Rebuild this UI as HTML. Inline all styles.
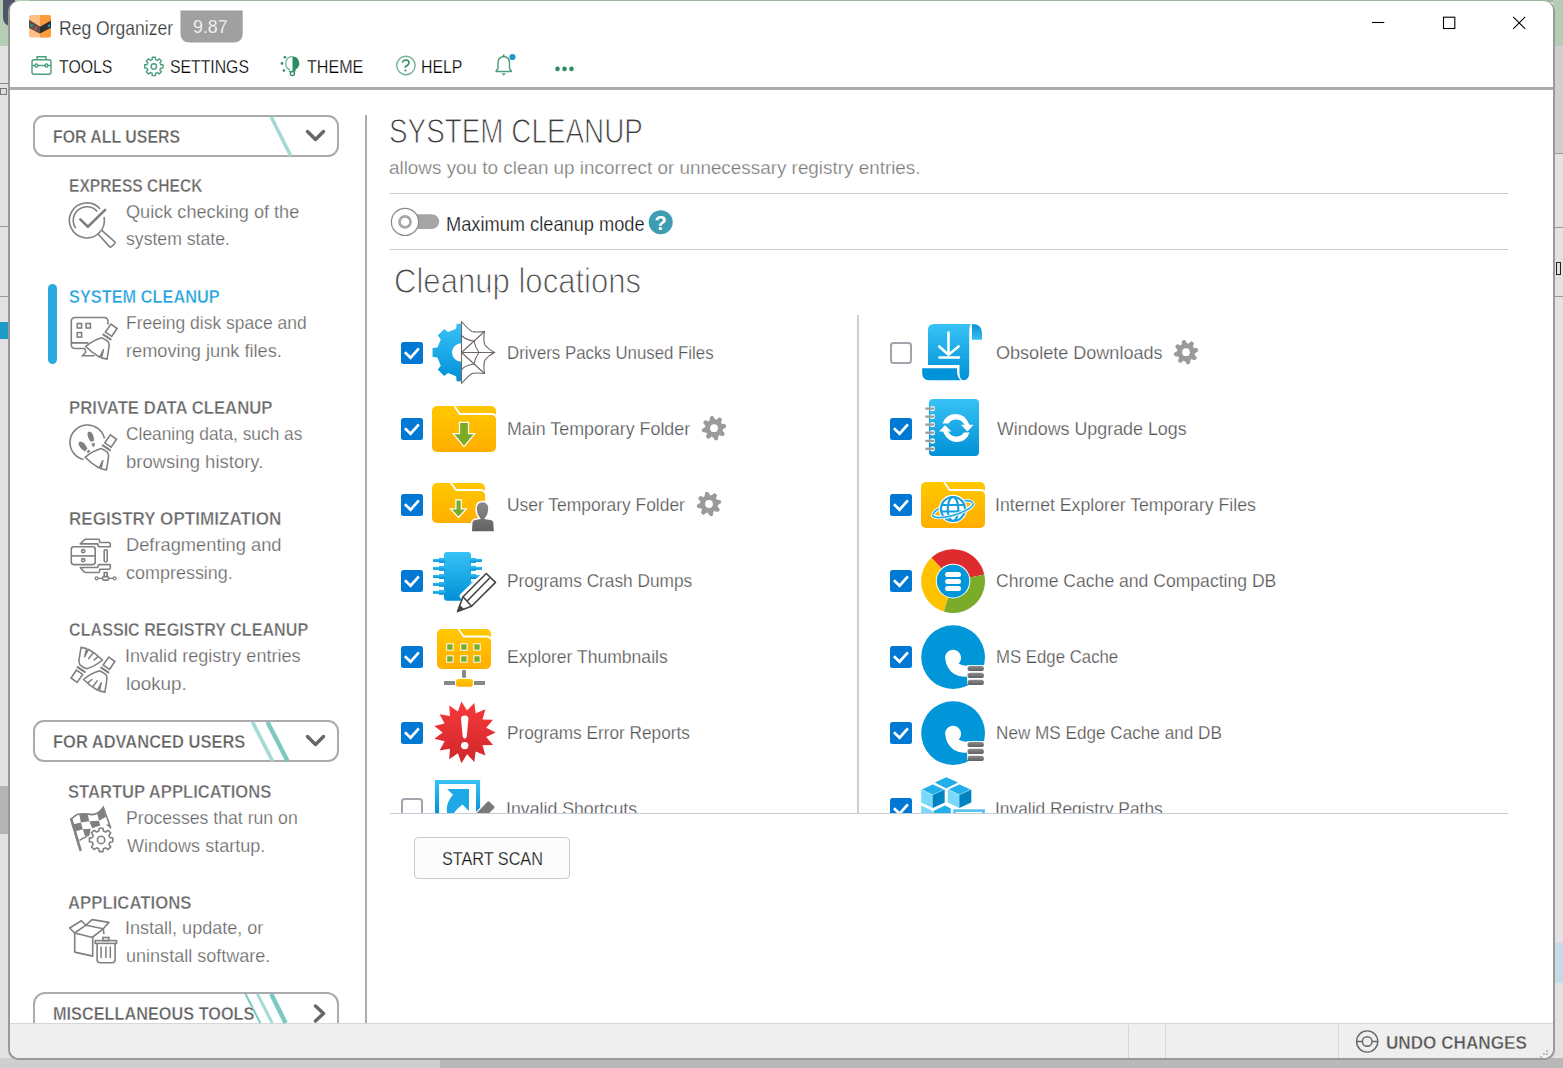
<!DOCTYPE html>
<html><head><meta charset="utf-8">
<style>
*{margin:0;padding:0;box-sizing:border-box}
html,body{width:1563px;height:1068px;overflow:hidden;background:#c9c9c9;font-family:"Liberation Sans",sans-serif}
.a{position:absolute}
.tx{position:absolute;white-space:nowrap;line-height:1;transform-origin:0 0;font-family:"Liberation Sans",sans-serif}
svg{position:absolute;overflow:visible}
</style></head><body>
<!-- desktop background -->
<div class=a style="left:0;top:0;width:1563px;height:1068px;background:#e2e2e2"></div>
<div class=a style="left:0;top:0;width:1563px;height:2px;background:#9fb39f"></div>
<div class=a style="left:0;top:0;width:30px;height:46px;background:#b4cdb4"></div>
<div class=a style="left:0;top:83px;width:10px;height:1px;background:#888"></div>
<div class=a style="left:0;top:88px;width:7px;height:7px;border:1px solid #777;background:#ddd"></div>
<div class=a style="left:3px;top:0;width:12px;height:26px;background:#4f5666;border-radius:0 0 0 8px"></div>
<div class=a style="left:1553px;top:0;width:10px;height:46px;background:#b4cdb4"></div>
<div class=a style="left:1553px;top:46px;width:10px;height:107px;background:#cfcfcf"></div>
<div class=a style="left:1553px;top:153px;width:10px;height:1px;background:#999"></div>
<div class=a style="left:1553px;top:227px;width:10px;height:1px;background:#999"></div>
<div class=a style="left:1553px;top:296px;width:10px;height:1px;background:#999"></div>
<div class=a style="left:1556px;top:262px;width:5px;height:13px;border:1px solid #222"></div>
<div class=a style="left:1553px;top:943px;width:10px;height:40px;background:#c5dbe8"></div>
<div class=a style="left:0;top:226px;width:10px;height:1px;background:#999"></div>
<div class=a style="left:0;top:296px;width:10px;height:1px;background:#999"></div>
<div class=a style="left:0;top:322px;width:10px;height:17px;background:#1e9ac8"></div>
<div class=a style="left:0;top:786px;width:10px;height:48px;background:#b4b4b4"></div>
<div class=a style="left:0;top:1058px;width:1563px;height:10px;background:#b8b8b8"></div>
<div class=a style="left:0;top:1058px;width:440px;height:10px;background:#cfcfcf"></div>
<!-- window -->
<div class=a style="left:8px;top:1px;width:1547px;height:1059px;border-radius:10px;background:#9a9a9a"></div>
<div class=a style="left:10px;top:1px;width:1543px;height:1057px;border-radius:9px;background:#fff;overflow:hidden">
  <div class=a style="left:0;top:86px;width:1543px;height:3px;background:#ababab"></div>
  <div class=a style="left:0;top:1022px;width:1543px;height:1px;background:#d8d8d8"></div>
  <div class=a style="left:0;top:1023px;width:1543px;height:35px;background:#efefef"></div>
  <div class=a style="left:1118px;top:1024px;width:1px;height:33px;background:#d6d6d6"></div>
  <div class=a style="left:1155px;top:1024px;width:1px;height:33px;background:#d6d6d6"></div>
  <div class=a style="left:1328px;top:1024px;width:1px;height:33px;background:#d6d6d6"></div>
  <div class=a style="left:355px;top:114px;width:2px;height:908px;background:#ababab"></div>
</div>
<svg width="1563" height="1068" viewBox="0 0 1563 1068" style="left:0;top:0">
<defs>
  <linearGradient id="gY" x1="0" y1="0" x2="0" y2="1"><stop offset="0" stop-color="#ffc800"/><stop offset="1" stop-color="#ffae00"/></linearGradient>
  <linearGradient id="gB" x1="0" y1="0" x2="0" y2="1"><stop offset="0" stop-color="#38c2f6"/><stop offset="1" stop-color="#0090d6"/></linearGradient>
  <linearGradient id="gR" x1="0" y1="0" x2="0" y2="1"><stop offset="0" stop-color="#f8383b"/><stop offset="1" stop-color="#cf272b"/></linearGradient>
  <linearGradient id="gG" x1="0" y1="0" x2="0" y2="1"><stop offset="0" stop-color="#8c8c8c"/><stop offset="1" stop-color="#606060"/></linearGradient>
  <clipPath id="listclip"><rect x="380" y="300" width="1140" height="513.5"/></clipPath>
</defs>

<!-- app icon -->
<g transform="translate(29,15)">
  <rect x="0" y="0" width="22" height="22.5" rx="2.5" fill="#fdbf85"/>
  <path d="M11 0H19.5Q22 0 22 2.5V20Q22 22.5 19.5 22.5H11Z" fill="#fd9a3a"/>
  <path d="M0 5L11 11.8L22 5.6V12.7L11 18.6L0 12.7Z" fill="#2f2f2f"/>
  <path d="M0 5L11 11.8V18.6L0 12.7Z" fill="#5b4f50"/>
  <rect x="1.5" y="9.5" width="2.4" height="2.4" fill="#1fa57a"/>
  <rect x="5.3" y="12.3" width="2.4" height="2.4" fill="#e04a3a"/>
  <rect x="18.7" y="9.6" width="2.4" height="2.4" fill="#2a93c0"/>
</g>
<!-- version badge -->
<path d="M180.5 10.5H242.7V33.5Q242.7 42.6 233.6 42.6H189.6Q180.5 42.6 180.5 33.5Z" fill="#a0a0a0"/>

<!-- menu icons -->
<g fill="none" stroke="#4a9f7d" stroke-width="1.4">
  <!-- toolbox -->
  <rect x="32" y="59.8" width="19" height="14.5" rx="2"/>
  <path d="M37 59.8V56.8H46V59.8"/>
  <path d="M32 65.5H51"/>
  <rect x="35.2" y="64" width="2.5" height="3" rx="1" fill="#fff"/>
  <rect x="45.2" y="64" width="2.5" height="3" rx="1" fill="#fff"/>
  <!-- gear -->
  <path d="M152.17 59.55L152.22 57.29L155.48 57.29L155.53 59.55L157.54 60.39L159.17 58.82L161.48 61.13L159.91 62.76L160.75 64.77L163.01 64.82L163.01 68.08L160.75 68.13L159.91 70.14L161.48 71.77L159.17 74.08L157.54 72.51L155.53 73.35L155.48 75.61L152.22 75.61L152.17 73.35L150.16 72.51L148.53 74.08L146.22 71.77L147.79 70.14L146.95 68.13L144.69 68.08L144.69 64.82L146.95 64.77L147.79 62.76L146.22 61.13L148.53 58.82L150.16 60.39Z" stroke-linejoin="round" stroke-width="1.4"/>
  <circle cx="153.85" cy="66.45" r="2.7" stroke-width="1.4"/>
  <!-- help circle -->
  <circle cx="405.9" cy="65.5" r="9.2" stroke="#6fb497" stroke-width="1.4"/>
  <!-- bell -->
  <path d="M496 71.5H511.5L509.5 68.5V63Q509.5 57 503.7 56.5Q498 57 498 63V68.5Z" stroke-linejoin="round"/>
</g>
<!-- theme bulb -->
<g>
  <path d="M292.5 56.3A7.1 7.1 0 0 1 295.6 69.6V71.6H292.5Z" fill="#2e8b63"/>
  <path d="M292.5 56.3A7.1 7.1 0 0 0 289.4 69.6V71.6H292.5" fill="none" stroke="#6fb497" stroke-width="1.3"/>
  <circle cx="292.4" cy="73.6" r="2.1" fill="none" stroke="#2e8b63" stroke-width="1.3"/>
  <circle cx="284.9" cy="57.2" r="1.3" fill="#2e8b63"/>
  <circle cx="282" cy="63.4" r="1.3" fill="#2e8b63"/>
  <circle cx="283.9" cy="70.5" r="1.3" fill="#2e8b63"/>
</g>
<path d="M402.6 61.8Q404 60 406 60Q409 60.3 409 62.8Q409 64.3 406.8 65.8Q405.3 66.6 405.3 67.3" fill="none" stroke="#2e8b63" stroke-width="1.6" stroke-linecap="round"/><circle cx="405.4" cy="70.5" r="1.1" fill="#2e8b63"/>
<path d="M501.6 73.5h4.3l-2.15 2z" fill="#2e8b63"/>
<path d="M503.7 56.5V54.5" stroke="#2e8b63" stroke-width="1.5"/>
<circle cx="512.5" cy="57" r="3.1" fill="#1e96d0"/>
<g fill="#2e8b63"><circle cx="557.5" cy="68.9" r="2.3"/><circle cx="564.5" cy="68.9" r="2.3"/><circle cx="571.5" cy="68.9" r="2.3"/></g>

<!-- window controls -->
<g stroke="#000" stroke-width="1.1" fill="none">
  <path d="M1372 22.5H1384.3"/>
  <rect x="1443.5" y="17.2" width="11.3" height="11.3"/>
  <path d="M1513.2 16.9L1525.2 28.9M1525.2 16.9L1513.2 28.9"/>
</g>

<!-- sidebar boxes -->
<rect x="34" y="116" width="304" height="40" rx="10" fill="none" stroke="#ababab" stroke-width="2"/>
<path d="M271.2 117L290.8 156" stroke="#a3d8d3" stroke-width="3.6"/>
<path d="M307.5 131.5L315.5 139.5L323.5 131.5" fill="none" stroke="#666" stroke-width="3.4" stroke-linecap="round" stroke-linejoin="round"/>
<rect x="34" y="721" width="304" height="40" rx="10" fill="none" stroke="#ababab" stroke-width="2"/>
<path d="M252.5 722L272.5 761" stroke="#a6dbd5" stroke-width="3.8"/>
<path d="M267.5 722L287.5 761" stroke="#7ec8c0" stroke-width="4.4"/>
<path d="M307.5 736.5L315.5 744.5L323.5 736.5" fill="none" stroke="#666" stroke-width="3.4" stroke-linecap="round" stroke-linejoin="round"/>
<clipPath id="miscclip"><rect x="20" y="980" width="340" height="43"/></clipPath><g clip-path="url(#miscclip)"><rect x="34" y="993" width="304" height="60" rx="11" fill="none" stroke="#ababab" stroke-width="2"/></g>
<path d="M245.5 994L260.3 1023" stroke="#7ccac4" stroke-width="2"/>
<path d="M257.4 994L272.2 1023" stroke="#a4dbd6" stroke-width="3"/>
<path d="M271.2 994L285.6 1023" stroke="#7cc8c2" stroke-width="4.5"/>
<path d="M315.5 1006L323.5 1013.5L315.5 1021" fill="none" stroke="#666" stroke-width="3.4" stroke-linecap="round" stroke-linejoin="round"/>

<g transform="translate(64,198)" fill="none" stroke="#808080" stroke-width="1.6"><path d="M40.06 18.97A17.5 17.5 0 1 1 36.11 10.92"/><path d="M11.76 30.2A13.6 13.6 0 0 1 33.2 13.51"/><path d="M16.3 21.4L23.9 28.7L41.1 11.9" stroke-width="2.7" stroke-linecap="round" stroke-linejoin="round"/><path d="M37.5 32.1L50.9 43.8Q51.5 44.6 50.8 45.5L47.2 48.9Q46.3 49.4 45.5 48.6L34.1 36" stroke-linejoin="round"/></g>
<g transform="translate(64,310)" fill="none" stroke="#808080" stroke-width="1.6"><path d="M44 14.4V11.5Q44 7.5 40 7.5H11.3Q7.3 7.5 7.3 11.5V34.5Q7.3 38.5 11.3 38.5H20.5Q22 40 21.5 42.5L18.5 45.8H30.5"/><path d="M7.3 32.9H24.5" stroke-width="1.8"/><rect x="13.3" y="13.5" width="4.3" height="4.5"/><rect x="22.1" y="13.5" width="4.3" height="4.5"/><rect x="13.3" y="22.6" width="4.3" height="4.5"/><g transform="translate(2.2,-1)"><path d="M44.8 15.1L50.9 19.5L45.5 27.3L39.2 23.1Z"/><path d="M37.2 25.6L44.3 30.4" stroke-width="2.2" stroke-linecap="round"/><path d="M35.5 28.7Q39.5 30.5 41.9 32.6Q43.5 35 42.8 38L40.9 50.1L35.3 48.9L37.2 40.9L33.6 48.2Q26 44 19.5 37.5Q27 31 35.5 28.7Z" stroke-linejoin="round"/></g></g>
<g transform="translate(64,420)" fill="none" stroke="#808080" stroke-width="1.6"><path d="M19.5 39.5A17.5 17.5 0 1 1 40.5 18.5"/><path d="M25.3 11.5Q28.5 11.5 29.8 17.5L30 21L26.5 21.7Q23.5 17 23.5 14Q23.5 11.5 25.3 11.5Z" fill="#808080" stroke="none"/><path d="M27.5 23.3L30.8 23L30.5 26.5L28.5 26.8Z" fill="#808080" stroke="none"/><path d="M16.5 21.5Q20 21.5 23.5 28.5L21 31.5Q16 29 14.5 24Q14.3 21.5 16.5 21.5Z" fill="#808080" stroke="none"/><path d="M23.3 32.3L25.7 30.3" stroke-width="2.2"/><g transform="translate(1.6,-0.2)"><path d="M44.8 15.1L50.9 19.5L45.5 27.3L39.2 23.1Z"/><path d="M37.2 25.6L44.3 30.4" stroke-width="2.2" stroke-linecap="round"/><path d="M35.5 28.7Q39.5 30.5 41.9 32.6Q43.5 35 42.8 38L40.9 50.1L35.3 48.9L37.2 40.9L33.6 48.2Q26 44 19.5 37.5Q27 31 35.5 28.7Z" stroke-linejoin="round"/></g></g>
<g transform="translate(64,532)" fill="none" stroke="#808080" stroke-width="1.6"><rect x="7.3" y="14.8" width="23.9" height="17.8" rx="2.5"/><path d="M7.3 23.9H31.2"/><circle cx="19.2" cy="19.2" r="1.6"/><circle cx="19.2" cy="28.2" r="1.6"/><path d="M16.3 11.9L20 8Q20.5 7.3 22 7.3H34.5Q35.3 7.5 35.5 8.5L35.8 10.5H45Q46.3 10.8 46.3 12V14.7H35.5Q34.3 14.5 34 13.5L33.8 11.9Z" stroke-linejoin="round"/><path d="M16.3 35.5L20 39.8Q20.5 40.5 22 40.5H34.5Q35.3 40.3 35.5 39.3L35.8 37.3H45Q46.3 37 46.3 35.8V32.6H35.5Q34.3 32.8 34 33.8L33.8 35.5Z" stroke-linejoin="round"/><rect x="40.2" y="17.8" width="3" height="12" rx="1"/><rect x="40.2" y="40.6" width="3" height="3.8"/><rect x="38.6" y="44.8" width="6" height="3.3" rx="1"/><path d="M34 46.3H38.6M44.6 46.3H49.2" stroke-width="1.3"/><circle cx="32.6" cy="46.3" r="1.5" stroke-width="1.3"/><circle cx="50.6" cy="46.3" r="1.5" stroke-width="1.3"/></g>
<g transform="translate(64,642)" fill="none" stroke="#808080" stroke-width="1.6"><path d="M44.8 15.1L50.9 19.5L45.5 27.3L39.2 23.1Z"/><path d="M37.2 25.6L44.3 30.4" stroke-width="2.2" stroke-linecap="round"/><path d="M35.5 28.7Q39.5 30.5 41.9 32.6Q43.5 35 42.8 38L40.9 50.1L35.3 48.9L37.2 40.9L33.6 48.2Q26 44 19.5 37.5Q27 31 35.5 28.7Z" stroke-linejoin="round"/><path d="M27.8 37.5L23.9 40.9M33.1 38.9L29.2 44.3" stroke-linecap="round"/><g transform="rotate(180 28.95 27.75)"><path d="M44.8 15.1L50.9 19.5L45.5 27.3L39.2 23.1Z"/><path d="M37.2 25.6L44.3 30.4" stroke-width="2.2" stroke-linecap="round"/><path d="M35.5 28.7Q39.5 30.5 41.9 32.6Q43.5 35 42.8 38L40.9 50.1L35.3 48.9L37.2 40.9L33.6 48.2Q26 44 19.5 37.5Q27 31 35.5 28.7Z" stroke-linejoin="round"/><path d="M27.8 37.5L23.9 40.9M33.1 38.9L29.2 44.3" stroke-linecap="round"/></g></g>
<defs><clipPath id="flagc"><path transform="translate(64,800)" d="M7 19.1Q12 14.5 15.2 14Q22 13.5 28.1 14.6Q34.5 14.5 39.3 7.3L46.9 28.1L35 40L26 40Q20 41 15.5 41Z"/></clipPath></defs>
<g clip-path="url(#flagc)"><g transform="translate(64,800)"><path d="M15.2 14L23.6 14L25.3 21.3L16.9 22.5Z" fill="#808080" stroke="none"/><path d="M33.1 13.2L39.3 7.3L41.9 16.9L35.1 20.8Z" fill="#808080" stroke="none"/><path d="M9.3 24.2L16.9 22.5L18.8 29.2L11.2 31.5Z" fill="#808080" stroke="none"/><path d="M25.3 21.3L34.8 20.8L36.3 25.5L28.1 28.3Z" fill="#808080" stroke="none"/><path d="M18.8 29.2L26.6 28.8L25.5 36L21.2 36.8Z" fill="#808080" stroke="none"/><path d="M41.9 24.7L46.5 24L47 28.6Z" fill="#808080" stroke="none"/></g></g>
<g transform="translate(64,800)" fill="none" stroke="#808080" stroke-width="1.6"><path d="M7.3 19.3L16.4 49.8" stroke-width="2.6" stroke-linecap="round"/><path d="M7 19.1Q12 14.5 15.2 14Q22 13.5 28.1 14.6Q34.5 14.5 39.3 7.3L46.9 28.5"/><path d="M15.5 40.5Q19 37.5 22.5 37" /><circle cx="37.1" cy="39.9" r="12.5" fill="#fff" stroke="none"/><path d="M35.3 28.2H38.9L39.5 31.1L41.6 32L44.1 30.3L46.7 32.9L45 35.4L45.9 37.5L48.8 38.1V41.7L45.9 42.3L45 44.4L46.7 46.9L44.1 49.5L41.6 47.8L39.5 48.7L38.9 51.6H35.3L34.7 48.7L32.6 47.8L30.1 49.5L27.5 46.9L29.2 44.4L28.3 42.3L25.4 41.7V38.1L28.3 37.5L29.2 35.4L27.5 32.9L30.1 30.3L32.6 32L34.7 31.1Z" stroke-linejoin="round"/><circle cx="37.1" cy="39.9" r="3.7"/></g>
<g transform="translate(64,910)" fill="none" stroke="#808080" stroke-width="1.6"><path d="M10.7 23V42.1L28.7 46.1V27.5L10.7 23Z" stroke-linejoin="round"/><path d="M10.7 23L21.9 15.2L39.3 18.8L28.1 27.5" stroke-linejoin="round"/><path d="M10.7 23L5.6 18L17.4 10.7L21.9 15.2" stroke-linejoin="round"/><path d="M21.9 15.2L28.1 9.6L44.9 12.4L39.3 18.8" stroke-linejoin="round"/><path d="M39.3 18.8L39.9 24.2"/><path d="M28.7 29V46.1" stroke="#fff" stroke-width="0"/><rect x="31.2" y="30.6" width="21.3" height="2.8" fill="#fff"/><rect x="38.8" y="27.5" width="6.1" height="3.1"/><path d="M33.1 33.7V49.8Q33.1 52.8 36.1 52.8H48.1Q51.1 52.8 51.1 49.8V33.7"/><path d="M37.1 37.1V47.5M41.9 37.1V47.5M46.3 37.1V47.5" stroke-width="1.5" stroke-linecap="round"/></g>

<!-- active bar -->
<rect x="48" y="284" width="9" height="80" rx="4.5" fill="#29abe2"/>

<!-- toggle -->
<rect x="405" y="214.3" width="34.2" height="14.6" rx="7.3" fill="#a5a5a5"/>
<circle cx="405" cy="221.9" r="13.6" fill="#fff" stroke="#8a8a8a" stroke-width="1.2"/>
<circle cx="405" cy="221.9" r="5.5" fill="none" stroke="#a5a5a5" stroke-width="2.6"/>
<circle cx="660.7" cy="222.2" r="12" fill="#3f9db3"/>
<text x="660.7" y="229.5" font-family="Liberation Sans" font-weight="700" font-size="20" fill="#fff" text-anchor="middle">?</text>

<!-- dividers -->
<rect x="390" y="193" width="1118" height="1" fill="#c6cbd8"/>
<rect x="390" y="249" width="1118" height="1" fill="#c6cbd8"/>
<rect x="857" y="315" width="2" height="498" fill="#cfcfcf"/>

<!-- START SCAN button -->
<rect x="414.5" y="837.5" width="155" height="41" rx="4" fill="#fcfcfc" stroke="#c8c8c8" stroke-width="1"/>

<!-- undo icon -->
<g fill="none" stroke="#666" stroke-width="1.4">
  <circle cx="1367.2" cy="1041.5" r="10.6"/>
  <circle cx="1367.2" cy="1041.5" r="4.8"/>
  <path d="M1356.6 1041.5H1362.4M1372 1041.5H1377.8"/>
</g>
<g fill="#bbb"><rect x="1546" y="1050" width="2" height="2"/><rect x="1543" y="1053" width="2" height="2"/><rect x="1546" y="1053" width="2" height="2"/><rect x="1540" y="1056" width="2" height="2"/></g>

<g clip-path="url(#listclip)">
<rect x="401" y="342" width="22" height="22" rx="2.5" fill="#0078d4"/><path d="M405.9 353.2L410.6 357.7L418 349.3" fill="none" stroke="#fff" stroke-width="2.7" stroke-linecap="square"/>
<rect x="891" y="343" width="20" height="20" rx="2.5" fill="#fff" stroke="#a3a3ab" stroke-width="2"/>
<rect x="401" y="418" width="22" height="22" rx="2.5" fill="#0078d4"/><path d="M405.9 429.2L410.6 433.7L418 425.3" fill="none" stroke="#fff" stroke-width="2.7" stroke-linecap="square"/>
<rect x="890" y="418" width="22" height="22" rx="2.5" fill="#0078d4"/><path d="M894.9 429.2L899.6 433.7L907 425.3" fill="none" stroke="#fff" stroke-width="2.7" stroke-linecap="square"/>
<rect x="401" y="494" width="22" height="22" rx="2.5" fill="#0078d4"/><path d="M405.9 505.2L410.6 509.7L418 501.3" fill="none" stroke="#fff" stroke-width="2.7" stroke-linecap="square"/>
<rect x="890" y="494" width="22" height="22" rx="2.5" fill="#0078d4"/><path d="M894.9 505.2L899.6 509.7L907 501.3" fill="none" stroke="#fff" stroke-width="2.7" stroke-linecap="square"/>
<rect x="401" y="570" width="22" height="22" rx="2.5" fill="#0078d4"/><path d="M405.9 581.2L410.6 585.7L418 577.3" fill="none" stroke="#fff" stroke-width="2.7" stroke-linecap="square"/>
<rect x="890" y="570" width="22" height="22" rx="2.5" fill="#0078d4"/><path d="M894.9 581.2L899.6 585.7L907 577.3" fill="none" stroke="#fff" stroke-width="2.7" stroke-linecap="square"/>
<rect x="401" y="646" width="22" height="22" rx="2.5" fill="#0078d4"/><path d="M405.9 657.2L410.6 661.7L418 653.3" fill="none" stroke="#fff" stroke-width="2.7" stroke-linecap="square"/>
<rect x="890" y="646" width="22" height="22" rx="2.5" fill="#0078d4"/><path d="M894.9 657.2L899.6 661.7L907 653.3" fill="none" stroke="#fff" stroke-width="2.7" stroke-linecap="square"/>
<rect x="401" y="722" width="22" height="22" rx="2.5" fill="#0078d4"/><path d="M405.9 733.2L410.6 737.7L418 729.3" fill="none" stroke="#fff" stroke-width="2.7" stroke-linecap="square"/>
<rect x="890" y="722" width="22" height="22" rx="2.5" fill="#0078d4"/><path d="M894.9 733.2L899.6 737.7L907 729.3" fill="none" stroke="#fff" stroke-width="2.7" stroke-linecap="square"/>
<rect x="402" y="799" width="20" height="20" rx="2.5" fill="#fff" stroke="#a3a3ab" stroke-width="2"/>
<rect x="890" y="798" width="22" height="22" rx="2.5" fill="#0078d4"/><path d="M894.9 809.2L899.6 813.7L907 805.3" fill="none" stroke="#fff" stroke-width="2.7" stroke-linecap="square"/>
<clipPath id="halfg"><rect x="420" y="310" width="41.2" height="90"/></clipPath>
<g clip-path="url(#halfg)"><path d="M456.09 328.74L456.66 323.86L465.74 323.86L466.31 328.74L474.38 332.09L478.25 329.04L484.66 335.45L481.61 339.32L484.96 347.39L489.84 347.96L489.84 357.04L484.96 357.61L481.61 365.68L484.66 369.55L478.25 375.96L474.38 372.91L466.31 376.26L465.74 381.14L456.66 381.14L456.09 376.26L448.02 372.91L444.15 375.96L437.74 369.55L440.79 365.68L437.44 357.61L432.56 357.04L432.56 347.96L437.44 347.39L440.79 339.32L437.74 335.45L444.15 329.04L448.02 332.09Z" fill="url(#gB)"/><circle cx="461.2" cy="352.5" r="9.2" fill="#fff"/></g>
<g fill="none" stroke="#6f6565" stroke-width="1.1"><path d="M461.5 321.5V383.5"/><path d="M461.5 321.5Q469 330 472 331.5Q476 332.5 484.5 331.5Q483 340 485 345Q488 349 494.5 352.5Q488 356 485 360Q483 365 484.5 373.5Q476 372.5 472 373.5Q469 375 461.5 383.5"/><path d="M461.5 352.5H494.5M461.5 352.5L484.5 331.5M461.5 352.5L484.5 373.5"/><path d="M461.5 335.5Q466 340 474 341Q475 347 479 352.5Q475 358 474 364Q466 365 461.5 369.5"/></g>
<rect x="432" y="406" width="64" height="46" rx="5" fill="url(#gY)"/><path d="M453.8 405L459.8 414H491Q496 414 496.5 418" fill="none" stroke="#fff" stroke-width="1.8"/>
<path d="M459.5 422.4h9v11.3h6.3L464 446.6L453.2 433.7h6.3z" fill="#7aab2a" stroke="#fff" stroke-width="1.2" stroke-linejoin="miter"/>
<path d="M710.57 416.91L712.84 416.46L714.83 419.74L716.47 420.07L719.56 417.79L721.49 419.08L720.57 422.81L721.49 424.20L725.29 424.77L725.74 427.04L722.46 429.03L722.13 430.67L724.41 433.76L723.12 435.69L719.39 434.77L718.00 435.69L717.43 439.49L715.16 439.94L713.17 436.66L711.53 436.33L708.44 438.61L706.51 437.32L707.43 433.59L706.51 432.20L702.71 431.63L702.26 429.36L705.54 427.37L705.87 425.73L703.59 422.64L704.88 420.71L708.61 421.63L710.00 420.71Z" fill="#9a9a9a" stroke="#9a9a9a" stroke-width="1" stroke-linejoin="round"/><circle cx="714" cy="428.2" r="3.89" fill="#fff"/>
<rect x="432" y="483" width="53" height="40" rx="5" fill="url(#gY)"/><path d="M450.2 482L456.2 490H480Q485 490 485.5 494" fill="none" stroke="#fff" stroke-width="1.8"/>
<path d="M455.9 499.9h5.4v8.9h5L458.6 517.5L450.5 508.8h5.4z" fill="#7aab2a" stroke="#fff" stroke-width="1.2"/>
<path d="M471.2 532L471.8 522Q472.5 519.5 476 519L479.5 518.5Q476 514 476 509Q476 501.5 482.5 501.5Q489 501.5 489 509Q489 514 485.5 518.5L489 519Q493.5 519.5 494 522L494.6 532Z" fill="url(#gG)" stroke="#fff" stroke-width="1.5"/>
<path d="M705.57 492.71L707.84 492.26L709.83 495.54L711.47 495.87L714.56 493.59L716.49 494.88L715.57 498.61L716.49 500.00L720.29 500.57L720.74 502.84L717.46 504.83L717.13 506.47L719.41 509.56L718.12 511.49L714.39 510.57L713.00 511.49L712.43 515.29L710.16 515.74L708.17 512.46L706.53 512.13L703.44 514.41L701.51 513.12L702.43 509.39L701.51 508.00L697.71 507.43L697.26 505.16L700.54 503.17L700.87 501.53L698.59 498.44L699.88 496.51L703.61 497.43L705.00 496.51Z" fill="#9a9a9a" stroke="#9a9a9a" stroke-width="1" stroke-linejoin="round"/><circle cx="709" cy="504" r="3.89" fill="#fff"/>
<g fill="url(#gB)"><rect x="444" y="552" width="27" height="48.7" rx="3"/><rect x="433" y="558.9" width="12" height="3"/><rect x="439" y="557.9" width="6" height="5"/><rect x="470" y="558.9" width="12" height="3"/><rect x="470" y="557.9" width="6" height="5"/><rect x="433" y="566.8" width="12" height="3"/><rect x="439" y="565.8" width="6" height="5"/><rect x="470" y="566.8" width="12" height="3"/><rect x="470" y="565.8" width="6" height="5"/><rect x="433" y="575.0" width="12" height="3"/><rect x="439" y="574.0" width="6" height="5"/><rect x="470" y="575.0" width="12" height="3"/><rect x="470" y="574.0" width="6" height="5"/><rect x="433" y="582.8" width="12" height="3"/><rect x="439" y="581.8" width="6" height="5"/><rect x="470" y="582.8" width="12" height="3"/><rect x="470" y="581.8" width="6" height="5"/><rect x="433" y="590.8" width="12" height="3"/><rect x="439" y="589.8" width="6" height="5"/></g>
<path d="M462 596L486.3 572.5L497 583L472 607Z" fill="#fff" stroke="#fff" stroke-width="5" stroke-linejoin="round"/>
<path d="M463 596.8L486.3 573.5L495.5 582.4L471.6 606.3L457.5 611.5Z" fill="#fff" stroke="#444" stroke-width="1.6" stroke-linejoin="round"/>
<path d="M489.9 577.8L466.7 601.5M463 596.8L471.6 606.3" fill="none" stroke="#444" stroke-width="1.6"/>
<path d="M457.5 611.5L459.5 604.5L464.5 609.5Z" fill="#444"/>
<rect x="437" y="629" width="54" height="40" rx="5" fill="url(#gY)"/><path d="M457.7 628L463.7 636.5H486Q491 636.5 491.5 640.5" fill="none" stroke="#fff" stroke-width="1.8"/>
<rect x="446.7" y="643.8" width="6.4" height="6.4" fill="#7aab2a" stroke="#fff" stroke-width="1"/>
<rect x="446.7" y="655.8" width="6.4" height="6.4" fill="#7aab2a" stroke="#fff" stroke-width="1"/>
<rect x="460.7" y="643.8" width="6.4" height="6.4" fill="#7aab2a" stroke="#fff" stroke-width="1"/>
<rect x="460.7" y="655.8" width="6.4" height="6.4" fill="#7aab2a" stroke="#fff" stroke-width="1"/>
<rect x="473.8" y="643.8" width="6.4" height="6.4" fill="#7aab2a" stroke="#fff" stroke-width="1"/>
<rect x="473.8" y="655.8" width="6.4" height="6.4" fill="#7aab2a" stroke="#fff" stroke-width="1"/>
<rect x="462" y="670" width="4" height="7.7" fill="#888"/><rect x="444" y="681" width="11" height="4" fill="#888"/><rect x="474" y="681" width="11" height="4" fill="#888"/><rect x="456" y="679" width="16.8" height="7.8" rx="2.5" fill="url(#gY)"/>
<path d="M495.70 732.40L486.22 736.97L493.02 745.01L482.50 745.33L485.44 755.44L475.70 751.45L474.28 761.88L467.00 754.28L461.46 763.23L457.90 753.32L449.20 759.25L449.98 748.75L439.62 750.62L444.60 741.35L434.38 738.85L442.70 732.40L434.38 725.95L444.60 723.45L439.62 714.18L449.98 716.05L449.20 705.55L457.90 711.48L461.46 701.57L467.00 710.52L474.28 702.92L475.70 713.35L485.44 709.36L482.50 719.47L493.02 719.79L486.22 727.83Z" fill="url(#gR)"/>
<path d="M461 719Q461 715.6 464.7 715.6Q468.4 715.6 468.4 719L466.8 736Q466.2 738.8 464.7 738.8Q463.2 738.8 462.6 736Z" fill="#fff"/><circle cx="464.7" cy="745.6" r="3.7" fill="#fff"/>
<path d="M435 780H480.1V814H476V784.1H439.1V814H435Z" fill="url(#gB)"/>
<path d="M447.1 788.9H469V811L462.5 804.5Q455 810 452 816L448 816Q444 805 453 794.8Z" fill="#1ea8e6"/>
<path d="M473 816L487 801.3Q488.5 800 490 801.3L494.5 805.8Q495.8 807.3 494.5 808.8L486 817Z" fill="#7a7a7a" stroke="#fff" stroke-width="1.2"/>
<path d="M934 324H970.8Q969.2 327 969.2 333V373Q969.2 380.3 963.5 380.3Q959.5 380.3 959.5 372V365H928V330Q928 324 934 324Z" fill="url(#gB)"/>
<path d="M922.2 368.3H957V372Q957.5 378 961 380.3H929Q922.2 380.3 922.2 373Z" fill="#0093da"/>
<linearGradient id="gBr" x1="0" y1="0" x2="0" y2="1"><stop offset="0" stop-color="#0a8ed4"/><stop offset="1" stop-color="#38c0f5"/></linearGradient><path d="M972 324Q982 324 982 333V339.8H972Z" fill="url(#gBr)"/>
<path d="M948.5 332.6V354.5M939.2 346.5L948.5 354.8L958.6 346.5M939.5 357.5H959" fill="none" stroke="#fff" stroke-width="2.6" stroke-linecap="round" stroke-linejoin="round"/>
<path d="M1182.57 340.91L1184.84 340.46L1186.83 343.74L1188.47 344.07L1191.56 341.79L1193.49 343.08L1192.57 346.81L1193.49 348.20L1197.29 348.77L1197.74 351.04L1194.46 353.03L1194.13 354.67L1196.41 357.76L1195.12 359.69L1191.39 358.77L1190.00 359.69L1189.43 363.49L1187.16 363.94L1185.17 360.66L1183.53 360.33L1180.44 362.61L1178.51 361.32L1179.43 357.59L1178.51 356.20L1174.71 355.63L1174.26 353.36L1177.54 351.37L1177.87 349.73L1175.59 346.64L1176.88 344.71L1180.61 345.63L1182.00 344.71Z" fill="#9a9a9a" stroke="#9a9a9a" stroke-width="1" stroke-linejoin="round"/><circle cx="1186" cy="352.2" r="3.89" fill="#fff"/>
<rect x="929" y="399" width="50" height="57" rx="4" fill="url(#gB)"/>
<circle cx="932.5" cy="408.6" r="2.6" fill="#fff"/><rect x="925.4" y="407.5" width="9" height="2.2" fill="#9a9a9a"/>
<circle cx="932.5" cy="416.6" r="2.6" fill="#fff"/><rect x="925.4" y="415.5" width="9" height="2.2" fill="#9a9a9a"/>
<circle cx="932.5" cy="424.6" r="2.6" fill="#fff"/><rect x="925.4" y="423.5" width="9" height="2.2" fill="#9a9a9a"/>
<circle cx="932.5" cy="432.7" r="2.6" fill="#fff"/><rect x="925.4" y="431.59999999999997" width="9" height="2.2" fill="#9a9a9a"/>
<circle cx="932.5" cy="440.9" r="2.6" fill="#fff"/><rect x="925.4" y="439.79999999999995" width="9" height="2.2" fill="#9a9a9a"/>
<circle cx="932.5" cy="448.8" r="2.6" fill="#fff"/><rect x="925.4" y="447.7" width="9" height="2.2" fill="#9a9a9a"/>
<path d="M942.5 423.6Q945.5 414 956.2 414Q965 414 969.5 424.8H973.5L967.5 431.5L961 424.8H964.5Q961.5 419.5 956.2 419.5Q951 419.5 948.5 423.6Z" fill="#fff"/>
<path d="M969.5 432.5Q966.5 442 956.2 442Q947.5 442 943 431.5H939L945 425.2L951.5 431.5H948Q951 436.5 956.2 436.5Q961.5 436.5 963.8 432.5Z" fill="#fff"/>
<rect x="921" y="482" width="64" height="46" rx="5" fill="url(#gY)"/><path d="M943.5 481L949.5 490H980Q985 490 985.5 494" fill="none" stroke="#fff" stroke-width="1.8"/>
<ellipse cx="953" cy="509" rx="20.5" ry="6" transform="rotate(-17 953 509)" fill="none" stroke="#fff" stroke-width="3.6"/>
<ellipse cx="953" cy="509" rx="20.5" ry="6" transform="rotate(-17 953 509)" fill="none" stroke="#2aaee8" stroke-width="1.7"/>
<circle cx="953" cy="509" r="14.3" fill="#fff"/>
<g fill="none" stroke="#1a9fdf" stroke-width="2.2"><circle cx="953" cy="509" r="12"/><ellipse cx="953" cy="509" rx="5.3" ry="12"/><path d="M941.5 505H964.5M941.5 511.5H964.5"/></g>
<path d="M932.5 514.5A20.5 6 -17 0 0 973.5 503.5" transform="" fill="none" stroke="#fff" stroke-width="3.4"/>
<path d="M932.5 514.5A20.5 6 -17 0 0 973.5 503.5" fill="none" stroke="#2aaee8" stroke-width="1.7"/>
<path d="M953.1 581.1L931.43 557.69A31.9 31.9 0 0 1 984.30 574.47Z" fill="#de2b2d"/>
<path d="M953.1 581.1L984.30 574.47A31.9 31.9 0 0 1 943.77 611.61Z" fill="#7aab29"/>
<path d="M953.1 581.1L943.77 611.61A31.9 31.9 0 0 1 931.43 557.69Z" fill="#ffc200"/>
<circle cx="953.1" cy="581.1" r="17.3" fill="#fff"/><circle cx="953.1" cy="581.1" r="16.3" fill="#0096d9"/>
<rect x="945.1" y="572.0" width="15.9" height="5" rx="2.5" fill="#fff"/>
<rect x="945.1" y="578.9" width="15.9" height="5" rx="2.5" fill="#fff"/>
<rect x="945.1" y="585.9" width="15.9" height="5" rx="2.5" fill="#fff"/>
<circle cx="953.1" cy="657.1" r="31.9" fill="#0096d9"/><path d="M958.6 663.6A8 8 0 1 0 945.1 657.6Q946.1 669.1 954.1 674.1Q960.1 677.6 967.1 676.6L967.1 665.6Q962.1 666.1 958.6 663.6Z" fill="#fff"/><path d="M967.1 665.1H986.1V684.1H967.1Z" fill="#fff"/><rect x="967.6" y="665.9" width="16.3" height="5.2" rx="2.6" fill="url(#gG)"/><rect x="967.6" y="672.8" width="16.3" height="5.2" rx="2.6" fill="url(#gG)"/><rect x="967.6" y="679.8" width="16.3" height="5.2" rx="2.6" fill="url(#gG)"/>
<circle cx="953.1" cy="733.1" r="31.9" fill="#0096d9"/><path d="M958.6 739.6A8 8 0 1 0 945.1 733.6Q946.1 745.1 954.1 750.1Q960.1 753.6 967.1 752.6L967.1 741.6Q962.1 742.1 958.6 739.6Z" fill="#fff"/><path d="M967.1 741.1H986.1V760.1H967.1Z" fill="#fff"/><rect x="967.6" y="741.9" width="16.3" height="5.2" rx="2.6" fill="url(#gG)"/><rect x="967.6" y="748.8" width="16.3" height="5.2" rx="2.6" fill="url(#gG)"/><rect x="967.6" y="755.8" width="16.3" height="5.2" rx="2.6" fill="url(#gG)"/>
<path d="M934.8 782.5L946.3 777.2L958.1 782.5L946.3 788.4Z" fill="#22aee8"/><path d="M921.2 789.4L932.7 784.1L944.7 789.4L932.7 795.1Z" fill="#22aee8" stroke="#fff" stroke-width="0.8"/><path d="M921.2 789.4L932.7 795.1V808.1L921.2 802.6Z" fill="#7ad8fb"/><path d="M932.7 795.1L944.7 789.4V802.6L932.7 808.1Z" fill="#0083c0"/><path d="M947.8 789.4L959.3 784.1L971.3 789.4L959.3 795.1Z" fill="#22aee8" stroke="#fff" stroke-width="0.8"/><path d="M947.8 789.4L959.3 795.1V808.1L947.8 802.6Z" fill="#7ad8fb"/><path d="M959.3 795.1L971.3 789.4V802.6L959.3 808.1Z" fill="#0083c0"/><path d="M921.2 805.5L932.7 811V814H921.2Z" fill="#7ad8fb"/><path d="M933.5 811L945 805.5L950.8 808.5V814H933.5Z" fill="#22aee8"/><path d="M953.2 809.2H984.9V814H982V812H956V814H953.2Z" fill="#5cc3ee"/>

</g>
<rect x="390" y="813" width="1118" height="1" fill="#c6cbd8"/>
</svg>

<div class=tx style="left:58.89px;top:19.00px;font-size:19.42px;font-weight:400;color:#333;transform:scaleX(0.9040);-webkit-text-stroke:0.25px #fff">Reg Organizer</div>
<div class=tx style="left:193.07px;top:17.30px;font-size:19.13px;font-weight:400;color:#fff;transform:scaleX(0.9314);-webkit-text-stroke:0.25px #a0a0a0">9.87</div>
<div class=tx style="left:59.00px;top:59.30px;font-size:17.83px;font-weight:400;color:#000;transform:scaleX(0.8881);-webkit-text-stroke:0.25px #fff">TOOLS</div>
<div class=tx style="left:170.11px;top:59.30px;font-size:17.83px;font-weight:400;color:#000;transform:scaleX(0.8851);-webkit-text-stroke:0.25px #fff">SETTINGS</div>
<div class=tx style="left:307.00px;top:59.30px;font-size:17.83px;font-weight:400;color:#000;transform:scaleX(0.9032);-webkit-text-stroke:0.25px #fff">THEME</div>
<div class=tx style="left:421.11px;top:59.30px;font-size:17.83px;font-weight:400;color:#000;transform:scaleX(0.8889);-webkit-text-stroke:0.25px #fff">HELP</div>
<div class=tx style="left:52.88px;top:127.00px;font-size:19.28px;font-weight:700;color:#5f5f5f;transform:scaleX(0.8243);-webkit-text-stroke:0.4px #fff">FOR ALL USERS</div>
<div class=tx style="left:68.65px;top:177.30px;font-size:18.26px;font-weight:700;color:#666;transform:scaleX(0.8548);-webkit-text-stroke:0.4px #fff">EXPRESS CHECK</div>
<div class=tx style="left:125.74px;top:203.00px;font-size:18.84px;font-weight:400;color:#666;transform:scaleX(0.9624);-webkit-text-stroke:0.25px #fff">Quick checking of the</div>
<div class=tx style="left:125.76px;top:229.90px;font-size:18.84px;font-weight:400;color:#666;transform:scaleX(0.9370);-webkit-text-stroke:0.25px #fff">system state.</div>
<div class=tx style="left:68.60px;top:288.30px;font-size:18.26px;font-weight:700;color:#1ea1dc;transform:scaleX(0.8952);-webkit-text-stroke:0.4px #fff">SYSTEM CLEANUP</div>
<div class=tx style="left:125.77px;top:314.00px;font-size:18.84px;font-weight:400;color:#666;transform:scaleX(0.9280);-webkit-text-stroke:0.25px #fff">Freeing disk space and</div>
<div class=tx style="left:125.73px;top:341.90px;font-size:18.84px;font-weight:400;color:#666;transform:scaleX(0.9673);-webkit-text-stroke:0.25px #fff">removing junk files.</div>
<div class=tx style="left:68.58px;top:399.30px;font-size:18.26px;font-weight:700;color:#666;transform:scaleX(0.9164);-webkit-text-stroke:0.4px #fff">PRIVATE DATA CLEANUP</div>
<div class=tx style="left:125.78px;top:425.00px;font-size:18.84px;font-weight:400;color:#666;transform:scaleX(0.9211);-webkit-text-stroke:0.25px #fff">Cleaning data, such as</div>
<div class=tx style="left:125.72px;top:452.90px;font-size:18.84px;font-weight:400;color:#666;transform:scaleX(0.9818);-webkit-text-stroke:0.25px #fff">browsing history.</div>
<div class=tx style="left:68.56px;top:510.30px;font-size:18.26px;font-weight:700;color:#666;transform:scaleX(0.9360);-webkit-text-stroke:0.4px #fff">REGISTRY OPTIMIZATION</div>
<div class=tx style="left:125.73px;top:536.00px;font-size:18.84px;font-weight:400;color:#666;transform:scaleX(0.9709);-webkit-text-stroke:0.25px #fff">Defragmenting and</div>
<div class=tx style="left:125.75px;top:563.90px;font-size:18.84px;font-weight:400;color:#666;transform:scaleX(0.9541);-webkit-text-stroke:0.25px #fff">compressing.</div>
<div class=tx style="left:68.62px;top:621.30px;font-size:18.26px;font-weight:700;color:#666;transform:scaleX(0.8833);-webkit-text-stroke:0.4px #fff">CLASSIC REGISTRY CLEANUP</div>
<div class=tx style="left:124.78px;top:647.00px;font-size:18.84px;font-weight:400;color:#666;transform:scaleX(0.9586);-webkit-text-stroke:0.25px #fff">Invalid registry entries</div>
<div class=tx style="left:125.70px;top:674.90px;font-size:18.84px;font-weight:400;color:#666;transform:scaleX(1.0017);-webkit-text-stroke:0.25px #fff">lookup.</div>
<div class=tx style="left:52.84px;top:732.00px;font-size:19.28px;font-weight:700;color:#5f5f5f;transform:scaleX(0.8556);-webkit-text-stroke:0.4px #fff">FOR ADVANCED USERS</div>
<div class=tx style="left:68.38px;top:784.00px;font-size:17.97px;font-weight:700;color:#666;transform:scaleX(0.9248);-webkit-text-stroke:0.4px #fff">STARTUP APPLICATIONS</div>
<div class=tx style="left:125.76px;top:808.70px;font-size:18.84px;font-weight:400;color:#666;transform:scaleX(0.9376);-webkit-text-stroke:0.25px #fff">Processes that run on</div>
<div class=tx style="left:126.70px;top:836.60px;font-size:18.84px;font-weight:400;color:#666;transform:scaleX(0.9573);-webkit-text-stroke:0.25px #fff">Windows startup.</div>
<div class=tx style="left:68.37px;top:894.70px;font-size:17.97px;font-weight:700;color:#666;transform:scaleX(0.9328);-webkit-text-stroke:0.4px #fff">APPLICATIONS</div>
<div class=tx style="left:124.78px;top:919.40px;font-size:18.84px;font-weight:400;color:#666;transform:scaleX(0.9577);-webkit-text-stroke:0.25px #fff">Install, update, or</div>
<div class=tx style="left:125.74px;top:947.30px;font-size:18.84px;font-weight:400;color:#666;transform:scaleX(0.9581);-webkit-text-stroke:0.25px #fff">uninstall software.</div>
<div class=tx style="left:52.85px;top:1004.00px;font-size:19.28px;font-weight:700;color:#5f5f5f;transform:scaleX(0.8451);-webkit-text-stroke:0.4px #fff">MISCELLANEOUS TOOLS</div>
<div class=tx style="left:389.37px;top:114.30px;font-size:34.20px;font-weight:400;color:#3a3a3a;transform:scaleX(0.8149);-webkit-text-stroke:1.0px #fff">SYSTEM CLEANUP</div>
<div class=tx style="left:389.46px;top:159.30px;font-size:18.22px;font-weight:400;color:#7a7a7a;transform:scaleX(1.0362);-webkit-text-stroke:0.25px #fff">allows you to clean up incorrect or unnecessary registry entries.</div>
<div class=tx style="left:445.72px;top:214.50px;font-size:19.42px;font-weight:400;color:#111;transform:scaleX(0.9397);-webkit-text-stroke:0.25px #fff">Maximum cleanup mode</div>
<div class=tx style="left:393.58px;top:263.70px;font-size:34.20px;font-weight:400;color:#4a4a4a;transform:scaleX(0.9093);-webkit-text-stroke:1.0px #fff">Cleanup locations</div>
<div class=tx style="left:507.11px;top:343.90px;font-size:18.84px;font-weight:400;color:#555;transform:scaleX(0.8935);-webkit-text-stroke:0.25px #fff">Drivers Packs Unused Files</div>
<div class=tx style="left:507.05px;top:419.90px;font-size:18.84px;font-weight:400;color:#555;transform:scaleX(0.9479);-webkit-text-stroke:0.25px #fff">Main Temporary Folder</div>
<div class=tx style="left:507.07px;top:495.90px;font-size:18.84px;font-weight:400;color:#555;transform:scaleX(0.9257);-webkit-text-stroke:0.25px #fff">User Temporary Folder</div>
<div class=tx style="left:507.08px;top:571.90px;font-size:18.84px;font-weight:400;color:#555;transform:scaleX(0.9170);-webkit-text-stroke:0.25px #fff">Programs Crash Dumps</div>
<div class=tx style="left:507.07px;top:647.90px;font-size:18.84px;font-weight:400;color:#555;transform:scaleX(0.9327);-webkit-text-stroke:0.25px #fff">Explorer Thumbnails</div>
<div class=tx style="left:507.08px;top:723.90px;font-size:18.84px;font-weight:400;color:#555;transform:scaleX(0.9152);-webkit-text-stroke:0.25px #fff">Programs Error Reports</div>
<div class=tx style="left:506.12px;top:799.90px;font-size:18.84px;font-weight:400;color:#555;transform:scaleX(0.9416);-webkit-text-stroke:0.25px #fff">Invalid Shortcuts</div>
<div class=tx style="left:995.64px;top:343.90px;font-size:18.84px;font-weight:400;color:#555;transform:scaleX(0.9587);-webkit-text-stroke:0.25px #fff">Obsolete Downloads</div>
<div class=tx style="left:996.60px;top:419.90px;font-size:18.84px;font-weight:400;color:#555;transform:scaleX(0.9487);-webkit-text-stroke:0.25px #fff">Windows Upgrade Logs</div>
<div class=tx style="left:994.72px;top:495.90px;font-size:18.84px;font-weight:400;color:#555;transform:scaleX(0.9382);-webkit-text-stroke:0.25px #fff">Internet Explorer Temporary Files</div>
<div class=tx style="left:995.67px;top:571.90px;font-size:18.84px;font-weight:400;color:#555;transform:scaleX(0.9332);-webkit-text-stroke:0.25px #fff">Chrome Cache and Compacting DB</div>
<div class=tx style="left:995.71px;top:647.90px;font-size:18.84px;font-weight:400;color:#555;transform:scaleX(0.8912);-webkit-text-stroke:0.25px #fff">MS Edge Cache</div>
<div class=tx style="left:995.69px;top:723.90px;font-size:18.84px;font-weight:400;color:#555;transform:scaleX(0.9106);-webkit-text-stroke:0.25px #fff">New MS Edge Cache and DB</div>
<div class=tx style="left:994.76px;top:799.90px;font-size:18.84px;font-weight:400;color:#555;transform:scaleX(0.9211);-webkit-text-stroke:0.25px #fff">Invalid Registry Paths</div>
<div class=tx style="left:441.72px;top:850.30px;font-size:18.41px;font-weight:400;color:#111;transform:scaleX(0.8804);-webkit-text-stroke:0.25px #fff">START SCAN</div>
<div class=tx style="left:1385.80px;top:1032.80px;font-size:19.13px;font-weight:700;color:#555;transform:scaleX(0.8962);-webkit-text-stroke:0.4px #efefef">UNDO CHANGES</div>
<div class=a style="left:380px;top:813.5px;width:1140px;height:22px;background:#fff"></div>
<div class=a style="left:390px;top:813px;width:1118px;height:1px;background:#c6cbd8"></div>
</body></html>
